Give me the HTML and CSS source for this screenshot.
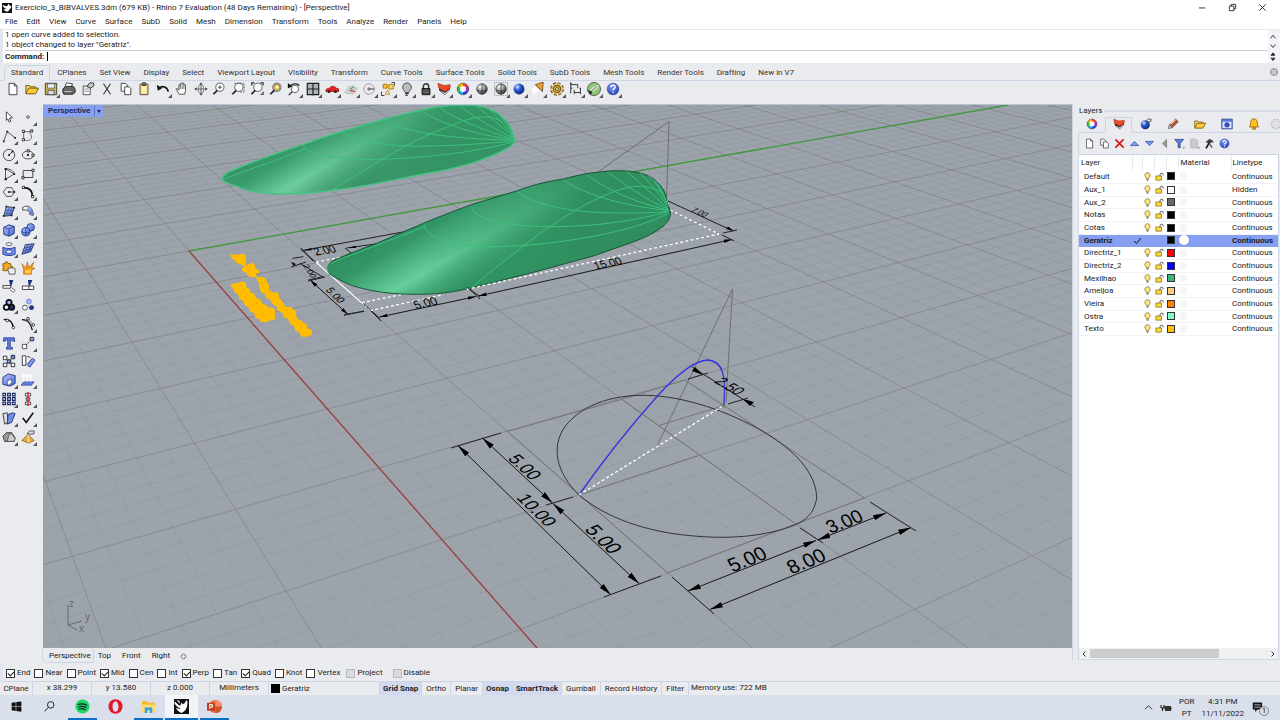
FILE: index.html
```html
<!DOCTYPE html>
<html lang="en">
<head>
<meta charset="utf-8">
<title>Exercicio_3_BIBVALVES.3dm - Rhino 7 Evaluation</title>
<link rel="stylesheet" href="styles.css">
</head>
<body>
<svg class="defs" aria-hidden="true">
  <defs>
    <linearGradient id="blue" x1="0" y1="0" x2="1" y2="1"><stop offset="0" stop-color="#b4c4ff"/><stop offset="1" stop-color="#4668d8"/></linearGradient>
    <radialGradient id="ball" cx=".35" cy=".3" r=".8"><stop offset="0" stop-color="#fff"/><stop offset=".5" stop-color="#999"/><stop offset="1" stop-color="#222"/></radialGradient>
    <radialGradient id="bball" cx=".35" cy=".3" r=".8"><stop offset="0" stop-color="#cfe0ff"/><stop offset=".4" stop-color="#2a5ad0"/><stop offset="1" stop-color="#021b66"/></radialGradient>
    <radialGradient id="help" cx=".4" cy=".3" r=".8"><stop offset="0" stop-color="#7f9cf5"/><stop offset="1" stop-color="#1f3cae"/></radialGradient>
    <symbol id="i-new" viewBox="0 0 16 16"><path d="M3.500 1.500h6l3 3v10h-9z" fill="#fff" stroke="#333"/><path d="M9.500 1.500v3h3" fill="none" stroke="#333"/></symbol>
    <symbol id="i-open" viewBox="0 0 16 16"><path d="M1 13V4h4l1 1.500h6V7" fill="#ffd870" stroke="#6b4b00"/><path d="M1 13.500 4 7h11.500l-3.500 6.500z" fill="#ffc83a" stroke="#6b4b00"/></symbol>
    <symbol id="i-copy" viewBox="0 0 16 16"><path d="M2.500 1.500h5l2 2v7h-7z" fill="#fff" stroke="#333"/><path d="M6.500 5.500h5l2 2v7h-7z" fill="#fff" stroke="#333"/></symbol>
    <symbol id="i-layers" viewBox="0 0 16 16"><path d="M3 10l6 4.500 5-5V7l-5 4-6-3z" fill="#fff" stroke="#222" stroke-width=".8"/><path d="M2 7l1 2.500 6 3 5.500-4.500V5L9 10z" fill="#222"/><path d="M1 1.500 8 4l7-1v4l-6 4-7-4z" fill="#ee4a28" stroke="#8a1d08" stroke-width=".6"/></symbol>
    <symbol id="i-wheel" viewBox="0 0 16 16"><g fill="none" stroke-width="3.200"><path d="M8 3a5 5 0 0 1 4.300 2.500" stroke="#ff3b30"/><path d="M12.300 5.500a5 5 0 0 1 0 5" stroke="#b01ad6"/><path d="M12.300 10.500A5 5 0 0 1 8 13" stroke="#2b3df0"/><path d="M8 13a5 5 0 0 1-4.300-2.500" stroke="#12b5e8"/><path d="M3.700 10.500a5 5 0 0 1 0-5" stroke="#2bc42b"/><path d="M3.700 5.500A5 5 0 0 1 8 3" stroke="#ffb300"/></g><circle cx="8" cy="8" r="6.600" fill="none" stroke="#222" stroke-width=".6"/><circle cx="8" cy="8" r="3.200" fill="#fff"/></symbol>
    <symbol id="i-help" viewBox="0 0 16 16"><circle cx="8" cy="8" r="6.700" fill="url(#help)" stroke="#1c3698" stroke-width=".6"/><path d="M5.600 6c.2-3.200 5-3 4.900-.2 0 1.900-2.400 1.700-2.400 3.800M8.100 11v1.700" fill="none" stroke="#fff" stroke-width="1.600"/></symbol>
    <symbol id="i-bulb" viewBox="0 0 16 16"><path d="M8 1.200a4.800 4.800 0 0 0-3 8.400L6 12h4l1-2.400A4.800 4.800 0 0 0 8 1.200z" fill="#ffe680" stroke="#5c4700"/><path d="M6 13.500h4M6.500 15h3" stroke="#444"/></symbol>
    <symbol id="i-unlock" viewBox="0 0 16 16"><path d="M9 7V4.500a2.800 2.800 0 0 1 5.500 0V6" fill="none" stroke="#333" stroke-width="1.500"/><path d="M1.500 7h10v7.500h-10z" fill="#ffd93a" stroke="#5c4700"/></symbol>
    <symbol id="i-lens" viewBox="0 0 16 16"><circle cx="9" cy="6" r="4.700" fill="#fafafa" stroke="#555"/><path d="M6 9.500 1.500 14" stroke="#222" stroke-width="2"/></symbol>
    <symbol id="i-sphere" viewBox="0 0 16 16"><circle cx="8" cy="8" r="6" fill="url(#ball)" stroke="#222" stroke-width=".7"/><path d="M8 2v12M2.500 9c3 2 8 2 11 0" fill="none" stroke="#222" stroke-width=".8"/></symbol>
  </defs>
</svg>

<header class="titlebar">
  <svg class="ico" viewBox="0 0 16 16"><path d="M0 0h16v16H0z" fill="#111"/><path d="M1 3c3 0 4 2 6 2s2-3 4-4c0 3 3 3 4 5-1 3-3 4-5 7-3 2-6-1-8-4 2 1 4 2 5 0C5 9 2 7 1 3z" fill="#fff"/></svg>
  <h1>Exercicio_3_BIBVALVES.3dm (679 KB) - Rhino 7 Evaluation (48 Days Remaining) - [Perspective]</h1>
  <div class="winbtns">
    <button aria-label="Minimize"><svg viewBox="0 0 10 10"><path d="M1 5.500h7"/></svg></button>
    <button aria-label="Restore"><svg viewBox="0 0 10 10"><path d="M1.500 3.500h5v5h-5zM3.500 3.500v-2h5v5h-2"/></svg></button>
    <button aria-label="Close"><svg viewBox="0 0 10 10"><path d="m1.500 1.500 7 7m0-7-7 7"/></svg></button>
  </div>
</header>

<nav class="menubar">
  <button>File</button><button>Edit</button><button>View</button><button>Curve</button><button>Surface</button><button>SubD</button><button>Solid</button><button>Mesh</button><button>Dimension</button><button>Transform</button><button>Tools</button><button>Analyze</button><button>Render</button><button>Panels</button><button>Help</button>
</nav>

<section class="command">
  <div class="cmdmain">
    <p>1 open curve added to selection.</p>
    <p>1 object changed to layer "Geratriz".</p>
    <div class="prompt"><label for="cmd">Command:</label><i class="caret"></i><input id="cmd" type="text"></div>
  </div>
  <div class="cmdscroll"><svg viewBox="0 0 10 34"><path d="m2.500 8.500 2.500-3 2.500 3M2.500 15l2.500 3 2.500-3"/><path d="m3 26 2-2.500L7 26zM3 29l2 2.500L7 29z" fill="#222"/></svg></div>
</section>

<nav class="tabs">
  <button class="on">Standard</button><button>CPlanes</button><button>Set View</button><button>Display</button><button>Select</button><button>Viewport Layout</button><button>Visibility</button><button>Transform</button><button>Curve Tools</button><button>Surface Tools</button><button>Solid Tools</button><button>SubD Tools</button><button>Mesh Tools</button><button>Render Tools</button><button>Drafting</button><button>New in V7</button>
  <button class="gear" aria-label="Toolbar options"><svg viewBox="0 0 16 16"><circle cx="8" cy="8" r="5.500" fill="none" stroke="#888" stroke-width="2" stroke-dasharray="2.300 1.200"/><circle cx="8" cy="8" r="4.500" fill="#ddd" stroke="#888"/><circle cx="8" cy="8" r="1.800" fill="#fff" stroke="#888"/></svg></button>
</nav>

<div class="toolbar">
  <button aria-label="New"><svg><use href="#i-new"/></svg></button>
  <button aria-label="Open"><svg><use href="#i-open"/></svg></button>
  <button class="m" aria-label="Save"><svg viewBox="0 0 16 16"><path d="M1.500 1.500h13v13h-13z" fill="#c9b75a" stroke="#333"/><path d="M4 2h8v5H4z" fill="#e8eef6" stroke="#444" stroke-width=".7"/><path d="M4.500 9.500h7v5h-7z" fill="#ddd" stroke="#333" stroke-width=".8"/></svg></button>
  <button aria-label="Print"><svg viewBox="0 0 16 16"><path d="m5 1 7 1-2 5H3z" fill="#fff" stroke="#333"/><path d="m1 8 3-3h9l2 3v4l-3 2H2l-1-2z" fill="#666" stroke="#222"/><path d="M3 11h8" stroke="#ddd"/></svg></button>
  <button aria-label="Properties"><svg viewBox="0 0 16 16"><path d="M2.500 4.500h8v10h-8z" fill="#fff" stroke="#444"/><path d="M4 7h5M4 9h5M4 11h5" stroke="#999"/><path d="m7 5 3-4h4l1 3-4 3z" fill="#ccc" stroke="#222"/></svg></button>
  <button aria-label="Cut"><svg viewBox="0 0 16 16"><path d="m4 2 8 12M12 2 4 14" stroke="#333" fill="none" stroke-width="1.300"/></svg></button>
  <button aria-label="Copy"><svg><use href="#i-copy"/></svg></button>
  <button aria-label="Paste"><svg viewBox="0 0 16 16"><path d="M3.500 2.500h9v12h-9z" fill="#ffdc6a" stroke="#444"/><path d="M6 1h4v3H6z" fill="#777" stroke="#333"/><path d="M5 5h6v8H5z" fill="#ffeeb0"/></svg></button>
  <button class="m" aria-label="Undo"><svg viewBox="0 0 16 16"><path d="M4 7c3-3 9-2 10 4" fill="none" stroke="#111" stroke-width="1.800"/><path d="m1 3 1 7 5-3z" fill="#111"/></svg></button>
  <button aria-label="Pan"><svg viewBox="0 0 16 16"><path d="m5 14-4-6 1-1 2.500 2.500V3.500q1-1 1.500 0V2q1-1 2 0v-.5q1-1 2 0V3q1.500-1 2 .5V10l-1 4z" fill="#fff" stroke="#333" stroke-width=".9"/><path d="M6 3v5M8.200 2v6M10.200 3v5" stroke="#333" stroke-width=".8"/></svg></button>
  <button aria-label="Rotate view"><svg viewBox="0 0 16 16"><path d="M8 1v14M1 8h14" stroke="#555"/><path d="m6 3 2-2.500L10 3zM6 13l2 2.500 2-2.500zM3 6 .5 8 3 10zM13 6l2.500 2-2.500 2z" fill="#444"/><ellipse cx="8" cy="8" rx="3" ry="5" fill="none" stroke="#777"/></svg></button>
  <button aria-label="Zoom"><svg viewBox="0 0 16 16"><use href="#i-lens"/><path d="M7 6h4M9 4v4" stroke="#444"/></svg></button>
  <button aria-label="Zoom window"><svg viewBox="0 0 16 16"><use href="#i-lens"/><path d="M4 1.500h11v10H9" fill="none" stroke="#333" stroke-dasharray="1.500 1.500"/></svg></button>
  <button aria-label="Zoom extents"><svg viewBox="0 0 16 16"><use href="#i-lens"/><path d="M2 4V1h3M12 1h3v3M15 11v3h-3" fill="none" stroke="#222" stroke-width="1.200"/></svg></button>
  <button aria-label="Zoom selected"><svg viewBox="0 0 16 16"><use href="#i-lens"/><circle cx="9" cy="6" r="3.500" fill="#ffd83a" stroke="#665"/><circle cx="9.500" cy="6" r="1.300" fill="#fff"/></svg></button>
  <button class="m" aria-label="Undo view"><svg viewBox="0 0 16 16"><circle cx="9" cy="8" r="4.200" fill="#fff" stroke="#555"/><path d="M6 11l-4 4" stroke="#222" stroke-width="1.500"/><path d="M4 4c4-3 8-2 10 0" fill="none" stroke="#111" stroke-width="1.600"/><path d="M1 1v6l5-2z" fill="#111"/></svg></button>
  <button class="m" aria-label="Four viewports"><svg viewBox="0 0 16 16"><path d="M1.500 1.500h13v13h-13z" fill="#aeb3ba" stroke="#222" stroke-width="1.400"/><path d="M8 1v14M1 8h14" stroke="#222" stroke-width="1.400"/></svg></button>
  <button class="m" aria-label="Named views"><svg viewBox="0 0 16 16"><path d="M1 9c1-2 3-2 4-2l2-2h4l2 2 3 1v3H1z" fill="#e01f1f" stroke="#7a0a0a" stroke-width=".6"/><circle cx="4.500" cy="11" r="1.600" fill="#222"/><circle cx="12" cy="11" r="1.600" fill="#222"/></svg></button>
  <button class="m" aria-label="CPlane"><svg viewBox="0 0 16 16"><path d="m1 12 5-7 9 2-5 7zM3 9l9 2M5 6.500l8 3M9 6l-5 7M12 6.500 7 13.500" fill="none" stroke="#aaa"/><path d="m7 10 4-6" stroke="#2b9b2b"/><path d="m7 10 6 1" stroke="#c22"/></svg></button>
  <button class="m" aria-label="Circle"><svg viewBox="0 0 16 16"><circle cx="8" cy="8" r="6" fill="none" stroke="#999"/><path d="M8 8h6" stroke="#333"/><circle cx="8" cy="8" r="1.300" fill="#fff" stroke="#333"/></svg></button>
  <button class="m" aria-label="Select"><svg viewBox="0 0 16 16"><path d="M2.500 2.500h4.500v4.500H2.500z" fill="#ffc62e" stroke="#a07000"/><path d="M9 3h5v5H9z" fill="#ffd95a" stroke="#a07000"/><path d="m5 14 2.500-5 2.500 5z" fill="#ffe9b0" stroke="#b98a3a"/><path d="M12 .5h3.500V4M.5 11v4.500H4" fill="none" stroke="#222"/></svg></button>
  <button class="m" aria-label="Hide"><svg viewBox="0 0 16 16"><path d="M8 1a5 5 0 0 0-3 9l1 2h4l1-2a5 5 0 0 0-3-9z" fill="#b9bcc0" stroke="#444"/><path d="M6 13h4M6 15h3" stroke="#333" stroke-width="1.400"/></svg></button>
  <button class="m" aria-label="Lock"><svg viewBox="0 0 16 16"><path d="M5 8V5a3 3 0 0 1 6 0v3" fill="none" stroke="#333" stroke-width="1.700"/><path d="M3.500 7.500h9v7h-9z" fill="#444" stroke="#111"/><path d="M5 10h6M5 12h6" stroke="#777"/></svg></button>
  <button class="m" aria-label="Layers"><svg><use href="#i-layers"/></svg></button>
  <button class="m" aria-label="Color"><svg><use href="#i-wheel"/></svg></button>
  <button aria-label="Shaded"><svg><use href="#i-sphere"/></svg></button>
  <button class="m" aria-label="Ghosted"><svg viewBox="0 0 16 16"><path d="M.5.500h15v15H.5z" fill="none" stroke="#888" stroke-dasharray="1 1"/><use href="#i-sphere"/></svg></button>
  <button class="m" aria-label="Render"><svg viewBox="0 0 16 16"><circle cx="8" cy="8" r="6.200" fill="url(#bball)"/></svg></button>
  <button class="m" aria-label="Spotlight"><svg viewBox="0 0 16 16"><path d="m5 3 9-3-1 11z" fill="#f59b1c" stroke="#333" stroke-width=".8"/><path d="m0 7 6-2 4 5-7 5z" fill="#fff" opacity=".8"/></svg></button>
  <button class="m" aria-label="Options"><svg viewBox="0 0 16 16"><circle cx="8" cy="8" r="6" fill="none" stroke="#4a3500" stroke-width="3.400" stroke-dasharray="3 1.700"/><circle cx="8" cy="8" r="5.700" fill="none" stroke="#f2c14a" stroke-width="2.200" stroke-dasharray="2.500 2"/><circle cx="8" cy="8" r="4" fill="#f2c14a" stroke="#4a3500"/><circle cx="8" cy="8" r="1.700" fill="#fff" stroke="#4a3500"/></svg></button>
  <button class="m" aria-label="Dimension"><svg viewBox="0 0 16 16"><path d="M2 1v12M2 3h8v4M2 7h2M6 12h7M13 7v7M6 9v5" fill="none" stroke="#222"/><path d="m1 2 1-2 1 2zM12 8l1-2 1 2z" fill="#222"/></svg></button>
  <button class="m" aria-label="Grasshopper"><svg viewBox="0 0 16 16"><circle cx="8" cy="8" r="7.500" fill="#8cc474" stroke="#555"/><path d="M2 12C5 5 9 3 14 4c-2 5-6 8-12 8z" fill="#c3dcb8"/><path d="m3 13 8-8" stroke="#777"/><path d="m1 9 5 2-2 4z" fill="#222"/></svg></button>
  <button class="m" aria-label="Help"><svg><use href="#i-help"/></svg></button>
</div>

<main class="work">
  <aside class="side">
    <button aria-label="Select"><svg viewBox="0 0 16 16"><path d="m5 2 7 7-3.500.3L10 13l-1.700.8-1.600-3.600L5 12z" fill="#fff" stroke="#333"/></svg></button>
    <button class="m" aria-label="Point"><svg viewBox="0 0 16 16"><circle cx="8" cy="8" r="1.500" fill="#fff" stroke="#444"/></svg></button>
    <button class="m" aria-label="Polyline"><svg viewBox="0 0 16 16"><path d="M2 14 6 3l9 7" fill="none" stroke="#444"/><path d="M1 13h2v2H1zM5 2h2v2H5zM14 9h2v2h-2z" fill="#222"/></svg></button>
    <button class="m" aria-label="Curve"><svg viewBox="0 0 16 16"><path d="M3 12c5 3 10 0 9-4S7 4 12 2M3 3v9M3 3h9" fill="none" stroke="#555" stroke-width=".9"/><path d="M1.500 1.500h2.500v2.500H1.500zM11 1h2.500v2.500H11zM1.500 11H4v2.500H1.500z" fill="#fff" stroke="#222"/></svg></button>
    <button class="m" aria-label="Circle"><svg viewBox="0 0 16 16"><circle cx="8" cy="8" r="6.500" fill="none" stroke="#444"/><path d="m8 8 4-4" stroke="#222"/><circle cx="8" cy="8" r="1.200" fill="#222"/><circle cx="12" cy="4" r="1.200" fill="#222"/></svg></button>
    <button class="m" aria-label="Ellipse"><svg viewBox="0 0 16 16"><ellipse cx="8" cy="8" rx="6.500" ry="4.500" fill="none" stroke="#444"/><circle cx="8" cy="8" r="1.300" fill="#222"/><path d="M7 2h2.500v2.500H7zM12.500 7H15v2.500h-2.500z" fill="#fff" stroke="#222"/></svg></button>
    <button class="m" aria-label="Arc"><svg viewBox="0 0 16 16"><path d="M4 2v12l10-6zM4 2c5 0 9 2 10 6" fill="none" stroke="#444"/><path d="M3 1h2.500v2.500H3zM3 12.500h2.500V15H3zM13 7h2v2h-2z" fill="#222"/></svg></button>
    <button class="m" aria-label="Rectangle"><svg viewBox="0 0 16 16"><path d="M2.500 4h11v8h-11z" fill="none" stroke="#333"/><path d="M1 11h2.500v2.500H1zM12.500 2.500H15V5h-2.500z" fill="#fff" stroke="#222"/></svg></button>
    <button class="m" aria-label="Polygon"><svg viewBox="0 0 16 16"><path d="m5 3-3.500 5L5 13h6l3.500-5L11 3z" fill="none" stroke="#444"/><path d="M8 8h6" stroke="#222"/><circle cx="8" cy="8" r="1.200" fill="#222"/><circle cx="14" cy="8" r="1.200" fill="#222"/></svg></button>
    <button class="m" aria-label="Fillet"><svg viewBox="0 0 16 16"><path d="M3 3c6 0 10 3 10 10" fill="none" stroke="#111" stroke-width="2"/><path d="M1.500 1.500H4V4H1.500zM12 12h2.500v2.500H12z" fill="#fff" stroke="#222"/></svg></button>
    <button class="m" aria-label="Surface"><svg viewBox="0 0 16 16"><path d="m5 3 9 1-3 9-9 1z" fill="url(#blue)" stroke="#233" /><path d="m4 7 9 1M3 10.500l9 .5M8 3.500 5 13.500M11 4 8 13" stroke="#334a99" stroke-width=".7"/><path d="M4 2h2v2H4zM13 3h2v2h-2zM1 12.500h2v2H1zM10 12h2v2h-2z" fill="#222"/></svg></button>
    <button class="m" aria-label="Loft"><svg viewBox="0 0 16 16"><path d="M2 4C8 0 14 4 14 13l-4-1C10 8 7 6 2 7z" fill="#fff" stroke="#333"/><path d="M7 3c4 1 7 5 7 9l-4-.500C10 8 8 7 6 6.500z" fill="url(#blue)"/></svg></button>
    <button class="m" aria-label="Box"><svg viewBox="0 0 16 16"><path d="m2 5 6-3 6 2v8l-6 3-6-2z" fill="url(#blue)" stroke="#203070"/><path d="m2 5 6 2 6-3M8 7v8" fill="none" stroke="#203070" stroke-width=".8"/></svg></button>
    <button class="m" aria-label="Boolean"><svg viewBox="0 0 16 16"><circle cx="11" cy="5" r="4.300" fill="url(#blue)" stroke="#122a77"/><circle cx="5.500" cy="10" r="4.700" fill="url(#blue)" stroke="#122a77"/><path d="M1 10c3 2 6 2 9 0M5.500 5.500v9" fill="none" stroke="#122a77" stroke-width=".7"/></svg></button>
    <button class="m" aria-label="Project"><svg viewBox="0 0 16 16"><ellipse cx="8" cy="2.500" rx="3.500" ry="1.700" fill="#fff" stroke="#555"/><path d="M1 6c4 2 10 2 14 0v8c-4 2-10 2-14 0z" fill="#6f8df0" stroke="#1d3892"/><ellipse cx="8" cy="11" rx="3.500" ry="2" fill="#fff" stroke="#1d3892"/></svg></button>
    <button class="m" aria-label="Mesh"><svg viewBox="0 0 16 16"><path d="m5 3 10-1-4 9-10 3z" fill="url(#blue)" stroke="#1d2f66"/><path d="m3.500 7 10-2M2.500 10.500l10-3M8 3 4.500 13M12 2 8 12" stroke="#1d2f66" stroke-width=".7"/></svg></button>
    <button aria-label="Puzzle"><svg viewBox="0 0 16 16"><path d="M1 3h3q-1-3 2-2 1 0 1 2h3v3q3-1 2 2l-2 1v2H1V8q2 0 1-2H1z" fill="#f7ab24" stroke="#8a5200"/><path d="M7 8h6q3 0 2 3v4H8v-3q-2 0-1-4z" fill="#eee" stroke="#555"/></svg></button>
    <button aria-label="Explode"><svg viewBox="0 0 16 16"><path d="m1 3 5 5 1-7 2 6 6-6-3 7 4 0-4 3v4H3V9z" fill="#f79a1c" stroke="#a34c00" stroke-width=".6"/><path d="m5 14 0-4 4 1 2-3v6z" fill="#ffd04a"/></svg></button>
    <button aria-label="Trim"><svg viewBox="0 0 16 16"><path d="M8 1h5l-3 9z" fill="#16307f"/><path d="M1 7.500h9v3H1z" fill="#fff" stroke="#333"/><path d="m11 10 4 3-2 2-4-3" fill="#fff" stroke="#555"/></svg></button>
    <button aria-label="Split"><svg viewBox="0 0 16 16"><path d="M8 1h5L9 10z" fill="#16307f"/><path d="M1.500 8h13v4h-13z" fill="#fff" stroke="#333"/><path d="M9 8v4" stroke="#333"/></svg></button>
    <button class="m" aria-label="Group"><svg viewBox="0 0 16 16"><g stroke="#111" stroke-width="2"><circle cx="8" cy="5" r="3" fill="#9fb0ff"/><circle cx="5" cy="10.500" r="3" fill="#fff"/><circle cx="11" cy="10.500" r="3" fill="#1b2f8a"/></g></svg></button>
    <button aria-label="Ungroup"><svg viewBox="0 0 16 16"><circle cx="9" cy="4" r="2.800" fill="#a5b4f8" stroke="#7787d0"/><circle cx="4.500" cy="11" r="2.800" fill="#fff" stroke="#444"/><circle cx="12" cy="11" r="2.800" fill="#1b2f8a"/></svg></button>
    <button aria-label="Edit points"><svg viewBox="0 0 16 16"><path d="M2 3c7-1 10 3 11 9" fill="none" stroke="#111" stroke-width="1.500"/><circle cx="6" cy="4" r="1.500" fill="#fff" stroke="#222"/><circle cx="13" cy="12" r="1.500" fill="#fff" stroke="#222"/></svg></button>
    <button class="m" aria-label="Control points"><svg viewBox="0 0 16 16"><path d="M1 3c8 0 10 5 12 12" fill="none" stroke="#111" stroke-width="1.500"/><path d="M5 5 8 1l6 8" fill="none" stroke="#777"/><circle cx="8" cy="2" r="1.500" fill="#fff" stroke="#222"/><circle cx="14" cy="9" r="1.500" fill="#fff" stroke="#222"/></svg></button>
    <button aria-label="Text tool"><svg viewBox="0 0 16 16"><path d="M2 2h12l.5 4H12l-1-1.500H9.500V13H12v2H5v-2h1.500V4.500H5L3.500 6H1.500z" fill="#5d7fe6" stroke="#1a2f80" stroke-width=".8"/></svg></button>
    <button class="m" aria-label="Scale"><svg viewBox="0 0 16 16"><path d="M1.500 9.500h5v5h-5z" fill="#fff" stroke="#444"/><path d="M10.500 1.500h4v4h-4z" fill="#8ca2f5" stroke="#222"/><path d="m6 10 5-5" stroke="#222" stroke-dasharray="2 1"/></svg></button>
    <button aria-label="Array"><svg viewBox="0 0 16 16"><g fill="#fff" stroke="#222"><path d="M1.500 2.500h4v4h-4zM1.500 10.500h4v4h-4zM10.500 10.500h4v4h-4z"/><path d="M10.500 1.500h4v4h-4zM6 6.500h4v4H6z" fill="#6f8df0"/></g></svg></button>
    <button aria-label="Orient"><svg viewBox="0 0 16 16"><path d="M1.500 2h4v11h-4z" fill="#fff" stroke="#333"/><path d="m7 12 6-7 3 2-6 8z" fill="#7f9bf5" stroke="#203070"/><path d="M7 3q3-1 4 2" fill="none" stroke="#333"/></svg></button>
    <button class="m" aria-label="Solid edit"><svg viewBox="0 0 16 16"><path d="m1 5 6-4 8 2v9l-6 3-8-2z" fill="url(#blue)" stroke="#203070"/><path d="m6 9 5-2v4l-3 3-2-1z" fill="#fff" stroke="#203070" stroke-width=".7"/></svg></button>
    <button class="m" aria-label="Offset"><svg viewBox="0 0 16 16"><path d="m3 10 12 0-3 4H0z" fill="#5d7fe6" stroke="#203070" stroke-width=".6"/><path d="M3 10V3M7 10V3M11 10V3M1.500 4 3 1.500 4.500 4M5.500 4 7 1.500 8.500 4M9.500 4 11 1.500 12.500 4" fill="none" stroke="#fff" stroke-width="1.300"/></svg></button>
    <button class="m" aria-label="Grid array"><svg viewBox="0 0 16 16"><g fill="#fff" stroke="#1c2c66" stroke-width="1.400"><path d="M1 1.500h3v3H1zM6.500 1.500h3v3h-3zM12 1.500h3v3h-3zM1 6.500h3v3H1zM6.500 6.500h3v3h-3zM12 6.500h3v3h-3zM1 11.500h3v3H1zM6.500 11.500h3v3h-3zM12 11.500h3v3h-3z"/></g></svg></button>
    <button class="m" aria-label="Align"><svg viewBox="0 0 16 16"><path d="M5 1.500h6v3H5zM6 6.500h4v3H6zM5 11.500h6v3H5z" fill="#fff" stroke="#333"/><path d="M8 0v16" stroke="#e01f1f" stroke-width="1.500"/></svg></button>
    <button class="m" aria-label="Analyze"><svg viewBox="0 0 16 16"><path d="m1 3 5-1 1 11-4 2z" fill="#ddd" stroke="#333"/><path d="m7 4 5-2 3 1-4 10-5 2z" fill="#6f8df0" stroke="#203070"/></svg></button>
    <button class="m" aria-label="Check"><svg viewBox="0 0 16 16"><path d="m2 8 4 5 8-11" fill="none" stroke="#111" stroke-width="1.800"/></svg></button>
    <button class="m" aria-label="Primitives"><svg viewBox="0 0 16 16"><path d="m1 7 4-4h6l4 6-1 4H3z" fill="#999" stroke="#333"/><path d="m6 13 2-8 3-1 4 6-1 3z" fill="#ccc" stroke="#333" stroke-width=".7"/></svg></button>
    <button class="m" aria-label="Pyramid"><svg viewBox="0 0 16 16"><path d="m1 12 7-7 7 7-6 3z" fill="#f2ab3c" stroke="#7a4c00" stroke-width=".8"/><path d="m8 5 1 10" stroke="#fff0c0"/><path d="m7 4 3-3h5v3l-4 1z" fill="#ddd" stroke="#222" stroke-width=".8"/></svg></button>
  </aside>

  <section class="viewport">
    <svg id="scene" viewBox="43 105 1029 543" preserveAspectRatio="xMinYMin slice">
      <defs>
        <linearGradient id="sh1" gradientUnits="userSpaceOnUse" x1="126" y1="216" x2="302" y2="518"><stop offset="0" stop-color="#379368"/><stop offset=".14" stop-color="#3a9b6b"/><stop offset=".36" stop-color="#6dcc9d"/><stop offset=".5" stop-color="#4fab7e"/><stop offset=".64" stop-color="#3a9066"/><stop offset="1" stop-color="#3e8c66"/></linearGradient>
        <linearGradient id="sh2" gradientUnits="userSpaceOnUse" x1="322" y1="553" x2="503" y2="864"><stop offset="0" stop-color="#2f8e5f"/><stop offset=".15" stop-color="#349667"/><stop offset=".45" stop-color="#65cf9b"/><stop offset=".58" stop-color="#45ab79"/><stop offset=".72" stop-color="#2f8f60"/><stop offset="1" stop-color="#2f8b5d"/></linearGradient>
        <linearGradient id="fade" x1="0" y1="0" x2="1" y2="0"><stop offset=".28" stop-color="#379a69" stop-opacity="0"/><stop offset=".55" stop-color="#379a69" stop-opacity=".55"/><stop offset=".75" stop-color="#339463" stop-opacity=".9"/></linearGradient>
        <linearGradient id="fade2" x1="0" y1="0" x2="1" y2="0"><stop offset=".28" stop-color="#339764" stop-opacity="0"/><stop offset=".55" stop-color="#339764" stop-opacity=".6"/><stop offset=".75" stop-color="#2f8d5e" stop-opacity=".95"/></linearGradient>
        <marker id="ar" viewBox="0 0 14 6" refX="14" refY="3" markerWidth="13" markerHeight="6" markerUnits="userSpaceOnUse" orient="auto-start-reverse"><path d="M14 3 0 0v6z"/></marker>
        <marker id="as" viewBox="0 0 14 6" refX="14" refY="3" markerWidth="8" markerHeight="4" markerUnits="userSpaceOnUse" orient="auto-start-reverse"><path d="M14 3 0 0v6z"/></marker>
      </defs>
      <rect x="43" y="104" width="2400" height="1600" fill="#9da3ab"/>
      <path id="minor" class="minor"/>
      <path id="major" class="major"/>
      <path d="M189 251 1008 105" stroke="#419a3f" stroke-width="1.300"/>
      <path d="M189 251 537 648" stroke="#97403f" stroke-width="1.300"/>

      <g class="aux"><path d="M598 172 669 121.500 666.500 200M657 446 732.500 289 726 402"/></g>

      <g transform="translate(190 100) scale(.33333)">
        <path d="M97 238C100 222 115 215 135 208 180 187 290 150 340 133 410 108 520 75 575 60 640 42 730 20 780 17 840 12 880 15 920 38 950 60 966 85 970 108L974 125C966 140 930 160 850 188 790 206 740 216 700 222L560 250C500 262 460 267 430 270 370 280 290 285 240 280 190 276 160 268 150 262 115 250 98 246 97 238z" fill="url(#sh1)"/>
        <path d="M97 238C100 222 115 215 135 208 180 187 290 150 340 133 410 108 520 75 575 60 640 42 730 20 780 17 840 12 880 15 920 38 950 60 966 85 970 108L974 125C966 140 930 160 850 188 790 206 740 216 700 222L560 250C500 262 460 267 430 270 370 280 290 285 240 280 190 276 160 268 150 262 115 250 98 246 97 238z" fill="url(#fade)" stroke="#3fc583" stroke-width="4"/>
        <g class="iso">
          <path d="M97 240C150 215 260 185 345 145M340 135C350 165 450 180 560 178S850 160 972 125M460 95C500 130 620 140 720 138S900 130 972 122M575 60C640 95 780 118 970 120M690 30C740 65 850 105 970 118M750 22C790 55 890 95 970 117M810 17C840 45 920 90 970 115M860 17C890 45 940 80 970 114M895 25C920 50 950 80 970 112M925 42C940 60 960 85 970 110M430 268C540 200 650 130 730 98S880 30 935 65"/>
        </g>

        <g class="thin">
          <path d="M340 451 655 393M470 444 570 430M333 448 570 655M307 475 340 470M355 540 400 530M462 645 522 634M465 444 485 460M830 560 870 590M330 490 400 532"/>
        </g>
        <path d="m340 452 24-8 1 7zM475 444l22-7 1 7zM303 485l15 7-7 6z"/>
        <path class="dash" d="M378 487 460 470M515 608 700 570M1440 330 1587 402"/>
        <path d="M378 487 515 608" stroke="#fff" stroke-width="4"/><path d="M515 608 540 632" stroke="#fff" stroke-width="3" stroke-dasharray="8 6"/>
        <path d="M412 510C413 498 418 490 427 484 450 470 540 438 560 430L700 370C760 345 800 330 850 312L980 273C1040 250 1080 244 1120 237 1160 226 1200 218 1230 216 1270 210 1310 212 1335 216 1370 222 1385 232 1400 245 1425 268 1428 285 1430 305L1440 330C1445 350 1435 365 1420 378 1400 395 1370 410 1340 422L1210 468 1030 517 840 565C780 578 740 583 680 583 630 583 590 580 550 572 510 565 480 556 460 545 430 530 415 522 412 510z" fill="url(#sh2)"/>
        <path d="M412 510C413 498 418 490 427 484 450 470 540 438 560 430L700 370C760 345 800 330 850 312L980 273C1040 250 1080 244 1120 237 1160 226 1200 218 1230 216 1270 210 1310 212 1335 216 1370 222 1385 232 1400 245 1425 268 1428 285 1430 305L1440 330C1445 350 1435 365 1420 378 1400 395 1370 410 1340 422L1210 468 1030 517 840 565C780 578 740 583 680 583 630 583 590 580 550 572 510 565 480 556 460 545 430 530 415 522 412 510z" fill="url(#fade2)" stroke="#17543a" stroke-width="3"/>
        <g class="iso">
          <path d="M412 510C414 495 424 490 450 478L705 380M705 370C695 400 760 440 900 440S1300 410 1435 340M845 320C845 350 930 380 1080 380S1340 360 1435 335M983 275C1020 310 1130 335 1240 338S1400 338 1435 333M1120 240C1180 280 1290 318 1435 331M1190 225C1240 260 1320 305 1435 330M1255 217C1300 250 1360 295 1435 328M1310 214C1340 240 1390 285 1433 325M1350 218C1370 240 1410 280 1433 320M1375 228C1400 250 1420 280 1432 315M1395 242C1410 260 1425 290 1431 310M845 562C980 450 1110 350 1210 302S1360 245 1420 280M412 510 420 528"/>
        </g>
        <path class="dash" d="M540 632 760 584M830 568 1587 402"/>
      </g>

      <g class="dim smalla">
        <path d="M310 280 348 314.500M379.500 317 476 296.500M478.500 296 732 239.500"/>
      </g>
      <path class="thin1" d="M668 201 732 230.500M301 248 313 261M291 267 306 262M308 281 325 277M344 315 364 311M370 310 381 321M467 287 480 299M722 235 734 241M723 233 737 230"/>
      <path d="m734 231-8-2 2-2.500z"/>

      <g transform="translate(190 100) scale(.33333)" fill="#ffbc00">
        <path d="m119 466 14-3 6 2 18-4 10 4-1 12 3 10-4 6 8 6 0-7 18-3 4 8 1 10 13 2-2 10-9 2 4 11 10-1 14 3 6 16 6 8-2 12 10 6 6 2 12-2 4 18 12 14 6 12 18 1 4 6 8 3 5 26 14 6 6 8 8 0 3 15 14 5-1 14-8 5-14 2-10-2-6-13-10-3-6-15-12-8-4-12-14-6-4-14-14-6-2-12-14-8-6-12-14-8-2-10-12-6-6-12 0-14-6-8-2-12-14 2-12-4-4-10-12-4-2-8 8-6-12-8-12-2-2-8-8-4z"/>
        <path d="m122 553 22-4 12-5 12 5 2 14 10 4 2 10 10 4 6 12 14 6 4 12 14 4 6 8 16 2 4 12-2 22-12 2-14 6-16-2-4-8-12-4-4-14-14-6-2-10-12-8-4-12-12-6-4-14-10-6-4-12-8-6z"/>
        <g fill="#d99a00"><circle cx="160" cy="568" r="2"/><circle cx="172" cy="580" r="2"/><circle cx="180" cy="577" r="2"/><circle cx="200" cy="610" r="2"/><circle cx="222" cy="636" r="2"/><circle cx="178" cy="510" r="2"/><circle cx="215" cy="550" r="2"/><circle cx="240" cy="580" r="2"/><circle cx="290" cy="630" r="2"/><circle cx="335" cy="680" r="2"/></g>
      </g>

      <g transform="translate(440 340) scale(.33333)">
        <g class="aux3">
          <path d="M200 275 545 178 735 120 1273 474 683 698 203 275M417 465 775 347M545 178 1068 552M655 257 850 197"/>
        </g>
        <path d="M417 465C350 400 330 320 377 257 430 190 530 160 640 167 760 175 890 225 990 287 1080 345 1130 410 1130 475 1120 530 1090 550 1020 570 940 592 850 597 750 587 620 575 500 535 417 465z" fill="none" stroke="#333" stroke-width="3"/>
        <path d="M417 465C480 375 570 260 655 165 710 105 760 62 803 60 850 62 858 110 852 195" fill="none" stroke="#3434e0" stroke-width="4"/>
        <path d="M417 465 850 197" stroke="#fff" stroke-width="4" stroke-dasharray="9 7"/>
        <path d="M846 193h8v8h-8z" fill="none" stroke="#666" stroke-width="2"/>
      </g>
      <g class="dim">
        <path d="M482.500 438 552.500 503M553 503.500 639 583.500M458 445.500 611 595M688 591 816 540.500M817.500 540 886 513M710 609.500 911 527.500"/>
      </g>
      <path class="thin1" d="M451 448 501 433M546 505 573 497M604 597 661 576M672 577 714 614M800 528 823 543M870 502 916 531M688 379 708 373M728 404 748 398M692 367 755 407"/>
      <path d="m703 375-11-4 3-4zM743 399l11 3-4 4z"/>

      <g class="dimtext">
        <text transform="translate(525 467) rotate(42) skewX(-22)" y="6" font-size="17">5.00</text>
        <text transform="translate(537 510) rotate(44) skewX(-22)" y="6" font-size="17">10.00</text>
        <text transform="translate(604 539) rotate(43) skewX(-22)" y="7" font-size="19">5.00</text>
        <text transform="translate(747 559) rotate(-22) skewX(8)" y="7" font-size="20">5.00</text>
        <text transform="translate(806 561) rotate(-22) skewX(8)" y="7" font-size="20">8.00</text>
        <text transform="translate(844 521) rotate(-21) skewX(8)" y="7" font-size="19">3.00</text>
        <text transform="translate(730 386) rotate(30) skewX(-30)" y="5" font-size="14">2.50</text>
        <text transform="translate(325 251) rotate(-9) skewX(20)" y="3" font-size="11">2.00</text>
        <text transform="translate(310 271) rotate(56) skewX(-20)" y="3" font-size="8">2.00</text>
        <text transform="translate(336 295) rotate(44) skewX(-20)" y="4" font-size="10">5.00</text>
        <text transform="translate(426 304) rotate(-12) skewX(15)" y="3" font-size="12">5.00</text>
        <text transform="translate(608 264) rotate(-12) skewX(15)" y="3" font-size="11">15.00</text>
        <text transform="translate(700 212) rotate(24) skewX(-30)" y="3" font-size="8">7.00</text>
      </g>
      <g class="triad"><path d="M68 605v20l14-4M68 625l9 5" /><text x="69" y="607">z</text><text x="85" y="620">y</text><text x="79" y="632">x</text></g>
    </svg>
    <div class="vlabel"><button>Perspective</button><button class="drop" aria-label="Viewport menu"></button></div>
  </section>

  <section class="panel">
    <h2>Layers</h2>
    <div class="ptabs">
      <button aria-label="Properties"><svg><use href="#i-wheel"/></svg></button>
      <button class="on" aria-label="Layers"><svg><use href="#i-layers"/></svg></button>
      <button aria-label="Rendering"><svg viewBox="0 0 16 16"><circle cx="7" cy="9" r="6" fill="url(#bball)"/><path d="M8 5h6l1-3-4-1z" fill="#eee" stroke="#333"/></svg></button>
      <button aria-label="Materials"><svg viewBox="0 0 16 16"><path d="m2 14 1-5 4 4z" fill="#ccc" stroke="#555"/><path d="m4 8 7-7 4 4-8 8z" fill="#c9502a" stroke="#555"/><path d="m5 8 6-6" stroke="#eee" stroke-width="1.500"/></svg></button>
      <button aria-label="Libraries"><svg><use href="#i-open"/></svg></button>
      <button aria-label="Help panel"><svg viewBox="0 0 16 16"><path d="M1 1.500h14v13H1z" fill="#5c7ad6" stroke="#28408f"/><path d="M2 5h12v8.500H2z" fill="#dfe6fa"/><circle cx="8" cy="9" r="3.500" fill="#3050b8"/></svg></button>
      <button aria-label="Notifications"><svg viewBox="0 0 16 16"><path d="M8 1c-4 0-4.500 4-4.500 7L2 12h12l-1.500-4C12.500 5 12 1 8 1zM6 13h4v2H6z" fill="#ffc21f" stroke="#8a5c00"/></svg></button>
      <button class="dim0" aria-label="Panel options"><svg viewBox="0 0 16 16"><circle cx="8" cy="8" r="6" fill="none" stroke="#bbb" stroke-width="2" stroke-dasharray="2.500 1.500"/><circle cx="8" cy="8" r="3" fill="none" stroke="#ccc"/></svg></button>
    </div>
    <div class="ptools">
      <button aria-label="New layer"><svg><use href="#i-new"/></svg></button>
      <button aria-label="New sublayer"><svg><use href="#i-copy"/></svg></button>
      <button aria-label="Delete"><svg viewBox="0 0 16 16"><path d="m2 2 12 12M14 2 2 14" stroke="#d4141c" stroke-width="2.400"/></svg></button>
      <button aria-label="Move up"><svg viewBox="0 0 16 16"><path d="m2 11 6-6 6 6z" fill="#7f9cf5" stroke="#2440a0"/></svg></button>
      <button aria-label="Move down"><svg viewBox="0 0 16 16"><path d="m2 5 6 6 6-6z" fill="#7f9cf5" stroke="#2440a0"/></svg></button>
      <button aria-label="Parent"><svg viewBox="0 0 16 16"><path d="M11 2v12L5 8z" fill="#999" stroke="#777"/></svg></button>
      <button aria-label="Filter"><svg viewBox="0 0 16 16"><path d="M1 2h13L9 8v6H6V8z" fill="#5d7fe6" stroke="#203070"/><path d="m13 15 2 0 0-2z"/></svg></button>
      <button aria-label="Layer state"><svg viewBox="0 0 16 16"><path d="M2.500 1.500h7l3 3v10h-10z" fill="#ccc" stroke="#aaa"/><path d="m13 15 2 0 0-2z"/></svg></button>
      <button aria-label="Tools"><svg viewBox="0 0 16 16"><path d="m2 6 6-5 5 3 1 3-3-1-2 2z" fill="#444"/><path d="m8 6-5 9" stroke="#222" stroke-width="2.600"/><path d="m8 9 4 5" stroke="#555" stroke-width="2"/></svg></button>
      <button aria-label="Help"><svg><use href="#i-help"/></svg></button>
    </div>
    <div class="list">
      <table>
        <colgroup><col class="c1"><col class="c2"><col class="c3"><col class="c3"><col class="c3"><col class="c4"><col></colgroup>
        <thead><tr><th>Layer</th><th></th><th></th><th></th><th></th><th>Material</th><th>Linetype</th></tr></thead>
        <tbody id="layers"></tbody>
      </table>
      <div class="hscroll"><svg viewBox="0 0 6 8"><path d="M4.500 1.500 2 4l2.500 2.500"/></svg><div class="track"><i></i></div><svg viewBox="0 0 6 8"><path d="M1.500 1.500 4 4 1.500 6.500"/></svg></div>
    </div>
  </section>
</main>

<nav class="vtabs"><button class="on">Perspective</button><button>Top</button><button>Front</button><button>Right</button><button class="plus" aria-label="Add viewport"><svg viewBox="0 0 8 8"><path d="M3 1h2v2h2v2H5v2H3V5H1V3h2z" fill="#fff" stroke="#888"/></svg></button></nav>

<div class="snaps">
  <label><input type="checkbox" checked>End</label><label><input type="checkbox">Near</label><label><input type="checkbox">Point</label><label><input type="checkbox" checked>Mid</label><label><input type="checkbox">Cen</label><label><input type="checkbox">Int</label><label><input type="checkbox" checked>Perp</label><label><input type="checkbox">Tan</label><label><input type="checkbox" checked>Quad</label><label><input type="checkbox">Knot</label><label><input type="checkbox">Vertex</label><label class="gap1"><input type="checkbox" disabled>Project</label><label class="gap2"><input type="checkbox" disabled>Disable</label>
</div>

<footer class="status">
  <button class="s33">CPlane</button><span class="s58">x 38.299</span><span class="s58">y 13.580</span><span class="s58">z 0.000</span><span class="s58">Millimeters</span>
  <button class="layer"><i></i>Geratriz</button>
  <button class="on">Grid Snap</button><button>Ortho</button><button>Planar</button><button class="on">Osnap</button><button class="on">SmartTrack</button><button>Gumball</button><button>Record History</button><button>Filter</button><span class="mem">Memory use: 722 MB</span>
</footer>

<div class="taskbar">
  <button aria-label="Start"><svg viewBox="0 0 16 16"><path d="m2 3.500 5-.8v5H2zM7.700 2.600 14 1.700v6H7.700zM2 8.400h5v5l-5-.8zM7.700 8.400H14v6l-6.300-.9z" fill="#111"/></svg></button>
  <button aria-label="Search"><svg viewBox="0 0 16 16"><circle cx="9.500" cy="6" r="4" fill="none" stroke="#222" stroke-width="1.200"/><path d="m6.500 9-4.500 5" stroke="#222" stroke-width="1.200"/></svg></button>
  <button class="run" aria-label="Spotify"><svg viewBox="0 0 16 16"><circle cx="8" cy="8" r="7.500" fill="#1ed760"/><path d="M3.500 5.800c3-1 6.500-.7 9 .8M4 8.300c2.500-.8 5.500-.5 7.800.8M4.500 10.700c2.200-.6 4.400-.3 6.200.7" fill="none" stroke="#123" stroke-width="1.300" stroke-linecap="round"/></svg></button>
  <button aria-label="Opera"><svg viewBox="0 0 16 16"><ellipse cx="8" cy="8" rx="7.500" ry="7.800" fill="#e3152d"/><ellipse cx="8" cy="8" rx="3.200" ry="5.700" fill="#dbe1ec"/></svg></button>
  <button class="run" aria-label="Explorer"><svg viewBox="0 0 16 16"><path d="M1 2h5l1.500 2H15v10H1z" fill="#f5b932"/><path d="M1 6h14v8H1z" fill="#ffdc75"/><path d="M4 15V9h8v6h-2.500v-3h-3v3z" fill="#2f9fe8"/></svg></button>
  <button class="run act" aria-label="Rhino"><svg viewBox="0 0 16 16"><path d="M0 0h16v16H0z" fill="#111"/><path d="M0 3c3 0 4 4 6 4s1-2 2-3c1 2 3 2 4-1l2-2c1 5 0 9-3 12l-3 2c-2-1-5-3-6-6 2 1 4 2 5 1C4 9 1 7 0 3zM3 1l3 1 0 3z" fill="#fff"/></svg></button>
  <button class="run" aria-label="PowerPoint"><svg viewBox="0 0 16 16"><circle cx="9" cy="8" r="7" fill="#ed6c47"/><path d="M9 1a7 7 0 0 1 7 7H9z" fill="#ff8f6b"/><path d="M9 15a7 7 0 0 0 7-7H9z" fill="#d35230"/><path d="M0 4h8.500v8.500H0z" fill="#c43e1c"/><path d="M3 10.500V6h1.700a1.400 1.400 0 0 1 0 2.800H3" fill="none" stroke="#fff" stroke-width="1.100"/></svg></button>
  <div class="tray">
    <svg class="chev" viewBox="0 0 10 10"><path d="m1 7 4-4 4 4"/></svg>
    <svg class="bat" viewBox="0 0 12 10"><path d="M4 3h7v5H5z" fill="#333"/><path d="M11 4.500v2M1 2v3h3V2M2.500 5v3" fill="none" stroke="#111"/></svg>
    <div>POR<br>PT</div>
    <div class="clock">4:31 PM<br>11/11/2022</div>
    <button class="note" aria-label="Notifications"><svg viewBox="0 0 20 18"><path d="M2 2h12v9H8l-3 3v-3H2z" fill="#111"/><path d="M4 5h8M4 8h8" stroke="#d9e0ec"/></svg><b>1</b></button>
  </div>
</div>
<script src="script.js"></script>
</body>
</html>
```

FILE: styles.css
```css
* { box-sizing: border-box; }
body {
  margin: 0; height: 100vh; display: flex; flex-direction: column; overflow: hidden;
  background: #eaebef; color: #222; font: 8px/10px Roboto, "Open Sans", sans-serif;
}
button { font: inherit; color: inherit; border: 0; background: none; padding: 0; margin: 0; white-space: nowrap; }
h1, h2, p { margin: 0; font-weight: 400; font-size: 8px; }
.defs { position: absolute; width: 0; height: 0; }

.titlebar { display: flex; align-items: center; height: 15px; background: #fff; padding-left: 2px; }
.titlebar .ico { width: 10px; height: 10px; margin-right: 3px; }
.winbtns { margin-left: auto; display: flex; gap: 21px; padding-right: 13px; }
.winbtns svg { width: 9px; height: 9px; display: block; fill: none; stroke: #222; }

.menubar { display: flex; align-items: center; height: 14px; background: #fff; padding-left: 5px; gap: 9px; }

.command { display: flex; height: 34px; background: #fff; border-left: 3px solid #dfe4ed; border-top: 1px solid #e3e7ee; }
.cmdmain { flex: 1; padding-left: 2px; }
.cmdmain p { height: 10px; }
.prompt { display: flex; align-items: center; border-top: 1px solid #c9cdd4; height: 12px; }
.prompt label { font-weight: 700; }
.caret { width: 1px; height: 9px; background: #000; margin-left: 3px; }
.prompt input { flex: 1; border: 0; outline: 0; background: none; padding: 0; height: 10px; font: inherit; }
.cmdscroll { width: 12px; background: #f2f3f6; }
.cmdscroll svg { width: 10px; height: 33px; fill: none; stroke: #333; stroke-width: 1; }

.tabs { display: flex; align-items: center; gap: 1px; height: 18px; padding: 3px 0 0 4px; border-bottom: 1px solid #cbd5e6; }
.tabs button { padding: 0 6px; height: 15px; color: #333; }
.tabs .on { border: 1px solid #cbd5e6; border-bottom-color: #eaebef; border-radius: 5px 0 0 0; height: 16px; }
.tabs .gear { margin-left: auto; padding: 0 1px; }
.tabs .gear svg { width: 10px; height: 10px; }

.toolbar { display: flex; justify-content: space-between; align-items: center; width: 616px; height: 16px; margin: 0 0 7px 5px; }
.toolbar button, .side button { position: relative; width: 16px; height: 16px; }
.toolbar svg, .side svg { width: 14px; height: 14px; display: block; margin: 1px; }
.m::after { content: ""; position: absolute; right: -1px; bottom: -1px; border: 2px solid; border-color: transparent #555 #555 transparent; }

.work { flex: 1; display: flex; min-height: 0; }
.side { width: 43px; display: grid; grid-template: repeat(18, 1fr) / 19px 19px; height: 342px; padding: 4px 0 0 1px; align-items: center; }
.viewport { flex: 1; position: relative; min-width: 0; border-top: 1px solid #b9c3d6; overflow: hidden; }
#scene { width: 100%; height: 100%; display: block; }
.vlabel { position: absolute; left: 0; top: 0; display: flex; height: 12px; background: #87a1f2; color: #1c2550; font-weight: 600; padding-left: 5px; }
.drop { border-left: 1px solid #5d73bd; width: 9px; margin: 1px 0 1px 4px; }
.drop::after { content: ""; display: block; border: 2px solid transparent; border-top: 3px solid #1c2550; margin: 2px 0 0 2px; width: 0; }
.minor { stroke: #8a9098; stroke-width: 1; fill: none; opacity: .36; }
.major { stroke: #7a777c; stroke-width: 1; fill: none; opacity: .56; }
.aux path { fill: none; stroke: #6f6f6f; }
.aux3 path { fill: none; stroke: #757575; stroke-width: 3; }
.iso path { fill: none; stroke: #3cc07f; stroke-width: 3; }
.thin path { fill: none; stroke: #222; stroke-width: 3; }
.thin1 { fill: none; stroke: #222; stroke-width: 1; }
.dash { fill: none; stroke: #fff; stroke-width: 4; stroke-dasharray: 9 7; }
.dim path { fill: none; stroke: #1a1a1a; stroke-width: 1; }
.dimtext text { font-family: "Liberation Sans", Arial, sans-serif; text-anchor: middle; fill: #000; }
.triad path { fill: none; stroke: #666a70; }
.triad text { font: 10px "Open Sans", sans-serif; fill: #666a70; }

.panel { width: 208px; display: flex; flex-direction: column; padding: 1px 0 0 5px; margin-bottom: -12px; border-left: 1px solid #cfd5df; }
.panel h2 { display: flex; align-items: center; gap: 2px; line-height: 12px; margin-left: 1px; }
.panel h2::after { content: ""; flex: 1; height: 2px; background: #d6dde9; }
.ptabs { display: flex; height: 16px; border-bottom: 1px solid #cbd5e6; }
.ptabs button { flex: 0 0 27px; height: 16px; padding-top: 1px; margin-right: 0; }
.ptabs svg { width: 12px; height: 12px; }
.ptabs .on { border: 1px solid #cbd5e6; border-bottom-color: #eaebef; padding: 0; }
.ptabs .dim0 { flex: 0 0 13px; padding-left: 3px; overflow: hidden; }
.ptools { display: flex; height: 21px; align-items: center; padding-left: 5px; gap: 4px; border-left: 1px solid #cbd5e6; }
.ptools svg { width: 11px; height: 11px; display: block; }
.list { flex: 1; margin-right: 1px; border: 1px solid #cbd5e6; background: #fff; display: flex; flex-direction: column; min-height: 0; }
table { border-collapse: collapse; table-layout: fixed; width: 100%; }
.c1 { width: 53px; } .c2 { width: 10px; } .c3 { width: 12px; } .c4 { width: 53px; }
th { font-weight: 400; text-align: left; height: 15px; padding: 0 0 0 2px; border-right: 1px solid #e6eaf1; }
td { height: 13px; padding: 0 0 0 1px; line-height: 11px; border-bottom: 1px solid #f1f3f7; white-space: nowrap; }
tr:nth-child(3n) td { height: 12px; }
td:first-child { padding-left: 5px; }
td:last-child, th:last-child { border-right: 0; padding-left: 1px; }
td svg { width: 9px; height: 9px; display: block; }
.sw { display: block; width: 8px; height: 8px; border: 1px solid #333; margin-left: 0; }
.dot { display: block; width: 8px; height: 8px; border-radius: 50%; background: #f6f6f7; margin-left: 0; }
.sel td { background: #869ff0; font-weight: 700; border-color: #869ff0; }
.sel .dot { background: #fff; width: 10px; height: 10px; }
.hscroll { margin-top: auto; height: 11px; background: #f0f0f0; display: flex; align-items: center; padding: 0 2px; gap: 3px; }
.hscroll svg { width: 6px; height: 8px; fill: none; stroke: #333; }
.track { flex: 1; height: 9px; }
.track i { display: block; width: 73%; height: 9px; background: #cdcdcd; }

.vtabs { display: flex; align-items: center; height: 16px; margin: 0 208px 0 42px; gap: 11px; }
.vtabs .on { border: 1px solid #cbd5e6; border-top: 0; border-radius: 0 0 0 5px; padding: 0 2px 0 6px; height: 14px; margin-right: -7px; }
.vtabs svg { width: 7px; height: 7px; display: block; }
.vtabs .plus { margin-left: -1px; }

.snaps { display: flex; align-items: center; height: 18px; padding: 1px 0 0 3px; gap: 4px; border-left: 3px solid #e0e5ee; border-bottom: 1px solid #cbd5e6; }
.snaps label { display: flex; align-items: center; gap: 2px; }
.snaps input { appearance: none; width: 9px; height: 9px; margin: 0; border: 1px solid #333; background: #fff; position: relative; }
.snaps input:checked::after { content: ""; position: absolute; left: 1px; top: 1px; width: 5px; height: 3px; border: solid #222; border-width: 0 0 1px 1px; transform: rotate(-45deg); }
.snaps input:disabled { border-color: #b9b9b9; background: #dcdcdc; }
.gap1 { margin-left: 2px; } .gap2 { margin-left: 6px; }

.status { display: flex; align-items: center; height: 13px; }
.status > * { height: 13px; line-height: 12px; padding: 0 4px; border-right: 1px solid #cbd5e6; text-align: center; white-space: nowrap; }
.status .s33 { width: 33px; padding: 0; } .status .s58 { width: 59px; padding: 0; }
.status .layer { width: 111px; display: flex; align-items: center; gap: 2px; padding: 0 2px; }
.layer i { width: 9px; height: 9px; background: #000; }
.status .on { background: #d3daf0; font-weight: 700; padding: 0 3px; }
.status .mem { border: 0; padding: 0 2px; }

.taskbar { display: flex; height: 25px; background: #d9e0ec; }
.taskbar > button { width: 33px; height: 25px; display: flex; align-items: center; justify-content: center; border-bottom: 2px solid transparent; }
.taskbar > button svg { width: 15px; height: 15px; }
.taskbar > button:nth-child(-n+2) svg { width: 13px; height: 13px; }
.taskbar > .run { border-image: linear-gradient(90deg, transparent 10%, #0a70c4 10% 90%, transparent 90%) 1; border-style: solid; border-width: 0 0 2px; }
.taskbar > .act { background: #f1f4f9; border-image: none; border-color: #0a70c4; }
.tray { margin-left: auto; display: flex; align-items: center; gap: 7px; padding-right: 11px; text-align: center; line-height: 12px; }
.tray svg { display: block; }
.chev { width: 9px; height: 9px; fill: none; stroke: #222; }
.bat { width: 12px; height: 10px; }
.note { position: relative; width: 18px; height: 17px; }
.note svg { width: 16px; height: 14px; }
.note b { position: absolute; right: 0; bottom: 0; width: 10px; height: 10px; border: 1px solid #888; border-radius: 50%; background: #ddd; line-height: 8px; font-weight: 400; }
```

FILE: script.js
```js
// Ground-plane camera: u = (a*x + b*y) / w, v = (kx*a*x + ky*b*y) / w, w = 1 + g*x + h*y
const origin = [189, 251];
const kx = 397 / 348, ky = -146 / 819;
const anchors = [
  [25, 0, 378, 467], [30, 0, 440.5, 539.5], [35, 0, 521, 628.3],
  [25, 5, 507.7, 431.7], [30, 5, 579, 495], [35, 5, 667.7, 572.7],
  [35, 10, 796, 524], [35, 13, 864.3, 498], [25, 10, 621.7, 399.3],
  [25, 13, 685, 380], [5, 5, 316, 262.3], [12, 5, 370, 310.7], [12, 25, 719, 234]
];

function solveCamera() {
  const m = Array.from({ length: 4 }, () => Array(5).fill(0));
  const add = r => { for (let i = 0; i < 4; i++) for (let j = 0; j < 5; j++) m[i][j] += r[i] * r[j]; };
  for (const [x, y, px, py] of anchors) {
    const u = px - origin[0], v = py - origin[1];
    add([x, y, -u * x, -u * y, u]);
    add([kx * x, ky * y, -v * x, -v * y, v]);
  }
  for (let i = 0; i < 4; i++) {
    for (let j = 0; j < 4; j++) {
      if (j === i) continue;
      const f = m[j][i] / m[i][i];
      for (let k = i; k < 5; k++) m[j][k] -= f * m[i][k];
    }
  }
  return m.map((r, i) => r[4] / r[i]);
}

const [a, b, g, h] = solveCamera();
function project(x, y) {
  const w = 1 + g * x + h * y;
  return (origin[0] + (a * x + b * y) / w).toFixed(1) + ' ' + (origin[1] + (kx * a * x + ky * b * y) / w).toFixed(1);
}

let minor = '', major = '';
for (let x = -60; x <= 50; x++) {
  const s = `M${project(x, -20)} L${project(x, 100)}`;
  if (x % 5) minor += s; else major += s;
}
for (let y = -20; y <= 100; y++) {
  const s = `M${project(-60, y)} L${project(50, y)}`;
  if (y % 5) minor += s; else major += s;
}
document.getElementById('minor').setAttribute('d', minor);
document.getElementById('major').setAttribute('d', major);

// Each dimension segment carries an arrowhead on both ends.
for (const p of document.querySelectorAll('.dim path')) {
  const id = p.parentNode.classList.contains('smalla') ? 'url(#as)' : 'url(#ar)';
  for (const seg of p.getAttribute('d').split('M').filter(Boolean)) {
    const line = document.createElementNS('http://www.w3.org/2000/svg', 'path');
    line.setAttribute('d', 'M' + seg);
    line.setAttribute('marker-start', id);
    line.setAttribute('marker-end', id);
    p.parentNode.append(line);
  }
  p.remove();
}

const layers = [
  ['Default', '#000000'], ['Aux_1', '#ffffff', 'Hidden'], ['Aux_2', '#696969'], ['Notas', '#000000'],
  ['Cotas', '#000000'], ['Geratriz', '#000000'], ['Directriz_1', '#ff0000'], ['Directriz_2', '#0000ff'],
  ['Mexilhao', '#3cb878'], ['Ameijoa', '#ffcc7a'], ['Vieira', '#ff7f00'], ['Ostra', '#7fffbf'], ['Texto', '#ffbf00']
];
document.getElementById('layers').innerHTML = layers.map(([name, color, type = 'Continuous']) => {
  const sel = name === 'Geratriz';
  const icon = id => sel ? '' : `<svg><use href="#${id}"/></svg>`;
  const check = sel ? '<svg viewBox="0 0 9 9"><path d="m1 5 2.500 2.500L8 2" fill="none" stroke="#111"/></svg>' : '';
  return `<tr class="${sel ? 'sel' : ''}"><td>${name}</td><td>${check}</td><td>${icon('i-bulb')}</td><td>${icon('i-unlock')}</td>` +
    `<td><span class="sw" style="background:${color}"></span></td><td><span class="dot"></span></td><td>${type}</td></tr>`;
}).join('');
```
